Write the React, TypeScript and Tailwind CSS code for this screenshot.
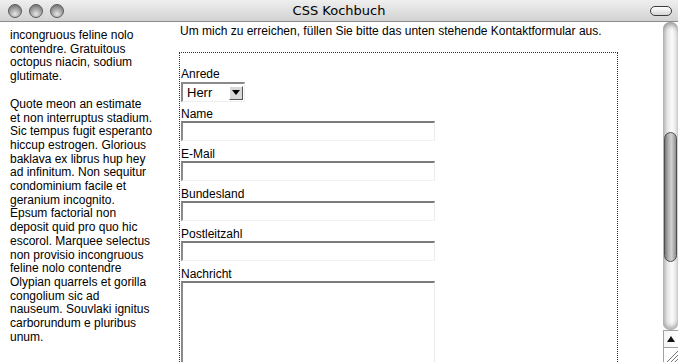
const sideIntro = [
  "incongruous feline nolo",
  "contendre. Gratuitous",
  "octopus niacin, sodium",
  "glutimate.",
];

const sideMain = [
  "Quote meon an estimate",
  "et non interruptus stadium.",
  "Sic tempus fugit esperanto",
  "hiccup estrogen. Glorious",
  "baklava ex librus hup hey",
  "ad infinitum. Non sequitur",
  "condominium facile et",
  "geranium incognito.",
  "Epsum factorial non",
  "deposit quid pro quo hic",
  "escorol. Marquee selectus",
  "non provisio incongruous",
  "feline nolo contendre",
  "Olypian quarrels et gorilla",
  "congolium sic ad",
  "nauseum. Souvlaki ignitus",
  "carborundum e pluribus",
  "unum.",
];

const fields = ["Name", "E-Mail", "Bundesland", "Postleitzahl"];

const inputBox =
  "block w-[254px] bg-white border-t-2 border-l-2 border-r border-b border-t-[#7b7b7b] border-l-[#8a8a8a] border-r-[#ececec] border-b-[#f2f2f2] outline-none";

const TitleBar = () => (
  <div className="h-[22px] shrink-0 grid grid-cols-[1fr_auto_1fr] items-center border-b border-[#8c8c8c] bg-[linear-gradient(to_bottom,#efefef,#d2d2d2)]">
    <div className="flex items-center gap-[7px] pl-[8px]">
      {[0, 1, 2].map((i) => (
        <span
          key={i}
          className="block w-[14px] h-[14px] rounded-full border border-[#5a5a5a] bg-[radial-gradient(circle_at_50%_75%,#e8e8e8,#a8a8a8_45%,#6e6e6e_90%)]"
        />
      ))}
    </div>
    <div className="text-[13px] text-black font-['DejaVu_Sans',sans-serif] leading-none">
      CSS Kochbuch
    </div>
    <div className="flex justify-end pr-[6px]">
      <span className="block w-[22px] h-[10px] rounded-full border border-[#3c3c3c] bg-[linear-gradient(to_bottom,#ffffff,#d6d6d6)]" />
    </div>
  </div>
);

const ScrollBar = () => (
  <div className="w-[15px] shrink-0 flex flex-col">
    <div className="flex-1 flex flex-col pt-[110px] rounded-t-[7px] rounded-b-[7px] bg-[linear-gradient(to_right,#b9b9b9,#e6e6e6_30%,#fbfbfb_60%,#e2e2e2)] shadow-[inset_0_5px_5px_-2px_#9a9a9a,inset_0_-5px_5px_-2px_#a8a8a8]">
      <div className="mx-[1px] h-[130px] rounded-[7px] border border-[#4e4e4e] bg-[linear-gradient(to_right,#7a7a7a,#b8b8b8_35%,#d0d0d0_60%,#8e8e8e)]" />
    </div>
    <div className="h-[17px] flex items-center justify-center border-t border-l border-[#a0a0a0] bg-[linear-gradient(to_right,#f4f4f4,#ffffff)]">
      <svg width="8" height="6" viewBox="0 0 8 6">
        <path d="M4 0 L8 6 L0 6 Z" fill="#111" />
      </svg>
    </div>
    <div className="h-[15px] border-t border-l border-[#a0a0a0] bg-white flex items-end justify-end">
      <svg width="13" height="13" viewBox="0 0 13 13">
        <path d="M2 13 L13 2 M6 13 L13 6 M10 13 L13 10" stroke="#7a7a7a" strokeWidth="1" />
      </svg>
    </div>
  </div>
);

export default function App() {
  return (
    <div className="w-[678px] h-[362px] overflow-hidden flex flex-col bg-white font-['Liberation_Sans',Arial,sans-serif] text-[12px] leading-[13.7px] text-black">
      <TitleBar />
      <div className="flex-1 flex min-h-0">
        <div className="flex-1 flex overflow-hidden">
          {/* sidebar */}
          <div className="w-[179px] shrink-0 pl-[10px] pt-[7px]">
            <p>
              {sideIntro.map((l, i) => (
                <span key={i} className="block whitespace-nowrap">
                  {l}
                </span>
              ))}
            </p>
            <p className="mt-[14px]">
              {sideMain.map((l, i) => (
                <span key={i} className="block whitespace-nowrap">
                  {l}
                </span>
              ))}
            </p>
          </div>

          {/* main */}
          <div className="flex-1">
            <p className="pt-[3px] pl-[1px] whitespace-nowrap">
              Um mich zu erreichen, füllen Sie bitte das unten stehende Kontaktformular aus.
            </p>
            <div className="mt-[13px] w-[439px] border border-dotted border-[#333] pt-[15px] pl-[1px] pb-[40px]">
              <label className="block">Anrede</label>
              <div className="mt-[1px] w-[64px] h-[20px] flex items-center bg-white border-t-2 border-l-2 border-r border-b border-t-[#8a8a8a] border-l-[#8a8a8a] border-r-[#eeeeee] border-b-[#eeeeee]">
                <span className="flex-1 pl-[4px] text-[13px] leading-none">Herr</span>
                <span className="w-[14px] h-[14px] mr-[1px] flex items-center justify-center bg-[#d8d8d8] border border-t-white border-l-white border-r-[#555] border-b-[#555]">
                  <svg width="8" height="5" viewBox="0 0 8 5">
                    <path d="M0 0 L8 0 L4 5 Z" fill="#000" />
                  </svg>
                </span>
              </div>
              {fields.map((f, i) => (
                <div key={f}>
                  <label className={i === 0 ? "block mt-[5px] leading-[14px]" : "block mt-[6px] leading-[14px]"}>
                    {f}
                  </label>
                  <input className={inputBox + " h-[20px]"} />
                </div>
              ))}
              <label className="block mt-[6px] leading-[14px]">Nachricht</label>
              <textarea className={inputBox + " h-[110px] resize-none"} />
            </div>
          </div>
        </div>
        <ScrollBar />
      </div>
    </div>
  );
}
